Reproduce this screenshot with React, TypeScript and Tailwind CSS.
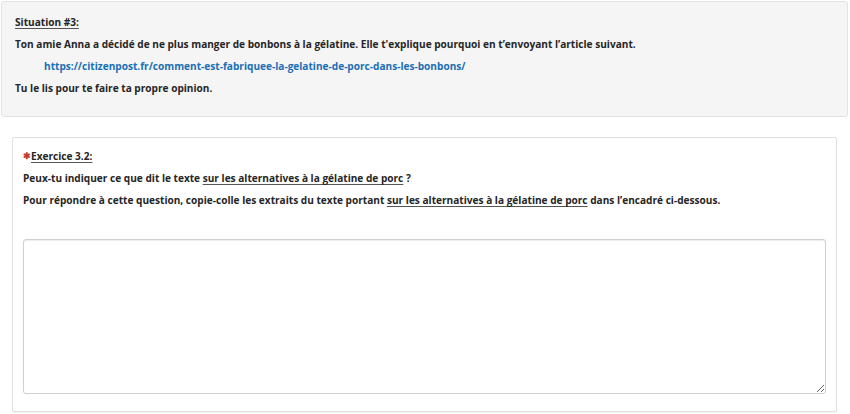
import React from "react";

export default function App() {
  const font = { fontFamily: '"Open Sans", "Noto Sans", sans-serif' };
  return (
    <div className="w-[850px] h-[414px] bg-white text-[#262626] overflow-hidden" style={font}>
      <div className="ml-[1px] mt-[1px] w-[847px] h-[116px] rounded-[3px] border border-[#e3e3e3] bg-[#f5f5f5] pl-[13px] pt-[9px] text-[10.1px] font-bold">
        <div className="leading-[22px]"><span className="underline underline-offset-2 decoration-[#555]">Situation #3:</span></div>
        <div className="leading-[22px]">Ton amie Anna a décidé de ne plus manger de bonbons à la gélatine. Elle t'explique pourquoi en t’envoyant l’article suivant.</div>
        <div className="leading-[22px] pl-[29px] text-[#1a6fb5]">https://citizenpost.fr/comment-est-fabriquee-la-gelatine-de-porc-dans-les-bonbons/</div>
        <div className="leading-[22px]">Tu le lis pour te faire ta propre opinion.</div>
      </div>
      <div className="ml-[12px] mt-[20px] w-[825px] h-[275px] rounded-[2px] border border-[#e0e0e0] bg-white pl-[10px] pr-[10px] pt-[7px] text-[10.1px] font-bold shadow-[0_1px_1px_rgba(0,0,0,0.05)]">
        <div className="leading-[22px]"><span className="text-[#c0392b] text-[9px] align-[1px]">✱</span><span className="underline underline-offset-2 decoration-[#555]">Exercice 3.2:</span></div>
        <div className="leading-[22px]">Peux-tu indiquer ce que dit le texte <span className="underline underline-offset-2 decoration-[#555]">sur les alternatives à la gélatine de porc</span> ?</div>
        <div className="leading-[22px]">Pour répondre à cette question, copie-colle les extraits du texte portant <span className="underline underline-offset-2 decoration-[#555]">sur les alternatives à la gélatine de porc</span> dans l’encadré ci-dessous.</div>
        <textarea className="mt-[28px] block w-[803px] h-[155px] rounded-[3px] border border-[#cfcfcf] bg-white shadow-[inset_0_1px_1px_rgba(0,0,0,0.075)] outline-none" />
      </div>
    </div>
  );
}
